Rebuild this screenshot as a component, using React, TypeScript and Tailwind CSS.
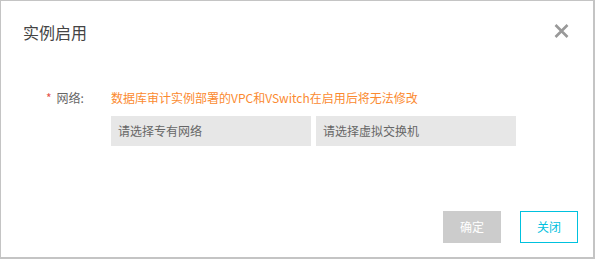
import React from "react";

export default function App() {
  return (
    <div
      className="relative w-[595px] h-[259px] bg-white border-t border-l border-r-2 border-b-2 border-[#c4c4c4] text-[12px]"
      style={{ fontFamily: '"Microsoft YaHei", "Noto Sans CJK SC", "Noto Sans", sans-serif' }}
    >
      <div className="flex items-start justify-between pl-[22px] pt-[19px] pr-[24px]">
        <h1 className="text-[16px] leading-[24px] text-[#444]">实例启用</h1>
        <button className="mt-[4px] text-[#999]" aria-label="close">
          <svg width="15" height="14" viewBox="0 0 15 14">
            <path d="M1.5 1 L13.5 13 M13.5 1 L1.5 13" stroke="#999999" strokeWidth="2.6" fill="none" />
          </svg>
        </button>
      </div>

      <div className="flex pl-[45px] pt-[45px]">
        <div className="w-[65px] leading-[18px] text-[#666]">
          <span className="text-[#e5534b]">*</span>
          <span className="ml-[5px]">网络:</span>
        </div>
        <div className="flex flex-col">
          <div className="leading-[18px] text-[#fb8a30]">数据库审计实例部署的VPC和VSwitch在启用后将无法修改</div>
          <div className="mt-[9px] flex gap-[5px]">
            <div className="w-[200px] h-[30px] bg-[#e7e7e7] pl-[7px] flex items-center text-[#666]">请选择专有网络</div>
            <div className="w-[200px] h-[30px] bg-[#e7e7e7] pl-[7px] flex items-center text-[#666]">请选择虚拟交换机</div>
          </div>
        </div>
      </div>

      <div className="absolute right-[15px] bottom-[14px] flex gap-[19px]">
        <button className="w-[58px] h-[32px] bg-[#cccccc] text-white">确定</button>
        <button className="w-[58px] h-[32px] border border-[#00c1de] text-[#00c1de] bg-white">关闭</button>
      </div>
    </div>
  );
}
